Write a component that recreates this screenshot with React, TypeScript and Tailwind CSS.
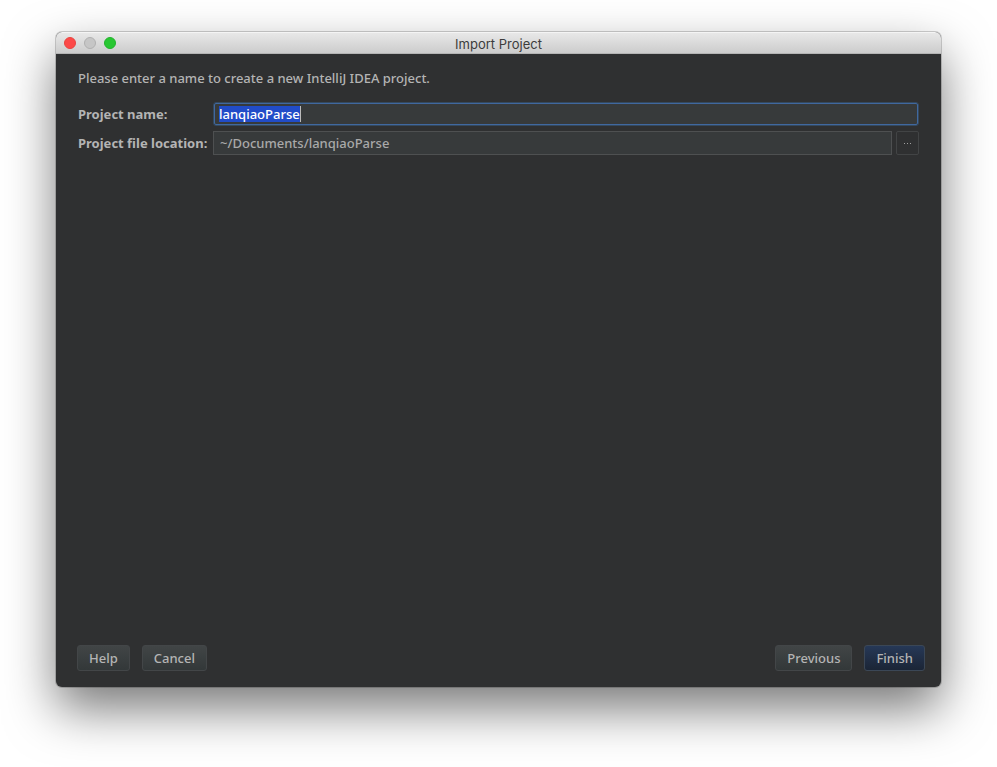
import { useEffect, useRef, useState } from "react";

const fieldBase =
  "min-w-0 flex-1 bg-[#373a3b] text-[13px] leading-4 font-medium outline-none";

const buttonBase =
  "h-[26px] rounded-[3px] border px-[11px] text-[13px] leading-4 font-medium text-[#b4b4b4]";

const plainButton = `${buttonBase} border-[#434648] bg-linear-to-b from-[#414546] to-[#333839]`;

export default function App() {
  const [name, setName] = useState("lanqiaoParse");
  const [location, setLocation] = useState("~/Documents/lanqiaoParse");
  const [allSelected, setAllSelected] = useState(true);
  const nameRef = useRef<HTMLInputElement>(null);

  useEffect(() => {
    nameRef.current?.focus();
    nameRef.current?.select();
  }, []);

  return (
    <div className="flex min-h-screen flex-col bg-white px-14 pt-8 pb-20 font-['Noto_Sans','Open_Sans',sans-serif]">
      <main className="flex flex-1 flex-col overflow-hidden rounded-md bg-[#2f3031] text-[13px] leading-4 text-[#b4b4b4] shadow-[0_0_0_1px_rgba(0,0,0,0.18),0_22px_50px_rgba(0,0,0,0.53)]">
        <header className="grid h-[22px] grid-cols-[1fr_auto_1fr] items-center border-t border-b border-t-[#f4f4f4] border-b-[#b4b4b4] bg-linear-to-b from-[#e8e8e8] to-[#cccccc] px-2">
          <div className="flex gap-2">
            <button aria-label="Close" className="size-3 rounded-full border border-[#e8443f] bg-[#fc4948]" />
            <button aria-label="Minimize" className="size-3 rounded-full border border-[#b0b0b0] bg-[#c6c6c6]" />
            <button aria-label="Zoom" className="size-3 rounded-full border border-[#22b32c] bg-[#28c732]" />
          </div>
          <h1 className="pt-px font-[Inter,sans-serif] text-[13px] leading-4 text-[#3c3c3c]">Import Project</h1>
        </header>

        <form className="flex flex-1 flex-col pt-4 pb-4" onSubmit={(e) => e.preventDefault()}>
          <p className="px-[22px] font-medium">Please enter a name to create a new IntelliJ IDEA project.</p>

          <div className="mt-4 grid grid-cols-[135px_1fr] items-center gap-y-[5px] px-[22px]">
            <label htmlFor="name" className="font-bold whitespace-nowrap">
              Project name:
            </label>
            <div className="relative flex h-6 rounded-[3px] border border-[#34495f] bg-[#373a3b]">
              <input
                id="name"
                ref={nameRef}
                value={name}
                onChange={(e) => setName(e.target.value)}
                onSelect={(e) => {
                  const field = e.currentTarget;
                  setAllSelected(field.selectionStart === 0 && field.selectionEnd === field.value.length);
                }}
                className={`${fieldBase} rounded-[2px] border border-[#40689f] px-1 text-white selection:bg-[#214cc8] selection:text-white`}
              />
              {allSelected && (
                <span aria-hidden="true" className="pointer-events-none absolute inset-y-0 left-[5px] flex items-center">
                  <span className="invisible font-medium">{name}</span>
                  <span className="h-4 w-px bg-[#bbbbbb]" />
                </span>
              )}
            </div>
            <label htmlFor="location" className="font-bold whitespace-nowrap">
              Project file location:
            </label>
            <div className="flex gap-1">
              <input
                id="location"
                value={location}
                onChange={(e) => setLocation(e.target.value)}
                className={`${fieldBase} h-6 border border-[#4e5051] px-[6px] text-[#a9a9a9]`}
              />
              <button
                type="button"
                aria-label="Browse"
                className="flex h-6 w-[23px] items-center justify-center rounded-[2px] border border-[#424445]"
              >
                <svg viewBox="0 0 9 1" className="h-px w-[9px]" fill="#a0a0a0" aria-hidden="true">
                  <rect x="1" width="1" height="1" />
                  <rect x="4" width="1" height="1" />
                  <rect x="7" width="1" height="1" />
                </svg>
              </button>
            </div>
          </div>

          <footer className="mt-auto flex gap-3 pr-4 pl-[21px]">
            <button type="button" className={plainButton}>Help</button>
            <button type="button" className={plainButton}>Cancel</button>
            <button type="button" className={`${plainButton} ml-auto`}>Previous</button>
            <button type="submit" className={`${buttonBase} border-[#3b4756] bg-linear-to-b from-[#263857] to-[#1b2536]`}>
              Finish
            </button>
          </footer>
        </form>
      </main>
    </div>
  );
}
